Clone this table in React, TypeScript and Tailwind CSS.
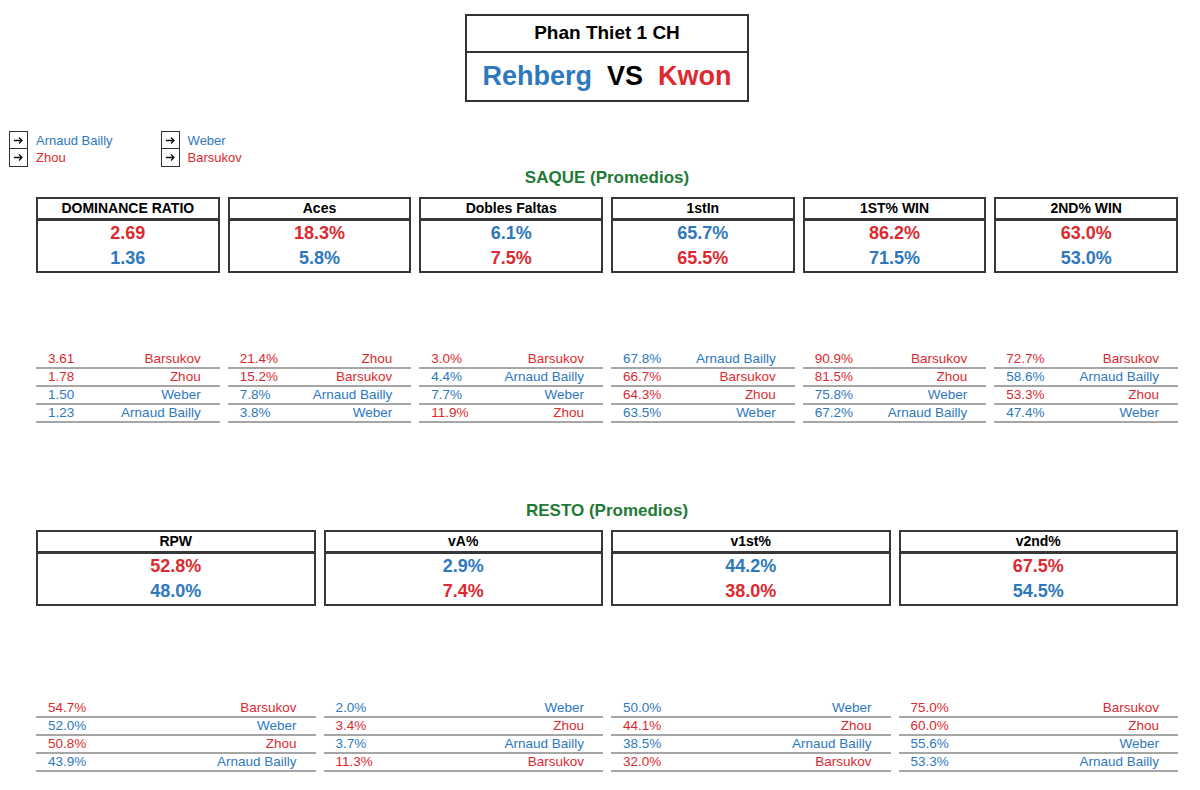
import React from 'react';

const BLUE = 'text-[#2e78bd]';
const RED = 'text-[#dc2a30]';

type Side = 'b' | 'r';
const color = (s: Side) => (s === 'b' ? BLUE : RED);

const players: Record<string, Side> = {
  'Arnaud Bailly': 'b',
  Weber: 'b',
  Zhou: 'r',
  Barsukov: 'r',
};

interface Stat {
  title: string;
  top: [string, Side];
  bottom: [string, Side];
  ranks: [string, string][];
}

const saque: Stat[] = [
  { title: 'DOMINANCE RATIO', top: ['2.69', 'r'], bottom: ['1.36', 'b'], ranks: [['3.61', 'Barsukov'], ['1.78', 'Zhou'], ['1.50', 'Weber'], ['1.23', 'Arnaud Bailly']] },
  { title: 'Aces', top: ['18.3%', 'r'], bottom: ['5.8%', 'b'], ranks: [['21.4%', 'Zhou'], ['15.2%', 'Barsukov'], ['7.8%', 'Arnaud Bailly'], ['3.8%', 'Weber']] },
  { title: 'Dobles Faltas', top: ['6.1%', 'b'], bottom: ['7.5%', 'r'], ranks: [['3.0%', 'Barsukov'], ['4.4%', 'Arnaud Bailly'], ['7.7%', 'Weber'], ['11.9%', 'Zhou']] },
  { title: '1stIn', top: ['65.7%', 'b'], bottom: ['65.5%', 'r'], ranks: [['67.8%', 'Arnaud Bailly'], ['66.7%', 'Barsukov'], ['64.3%', 'Zhou'], ['63.5%', 'Weber']] },
  { title: '1ST% WIN', top: ['86.2%', 'r'], bottom: ['71.5%', 'b'], ranks: [['90.9%', 'Barsukov'], ['81.5%', 'Zhou'], ['75.8%', 'Weber'], ['67.2%', 'Arnaud Bailly']] },
  { title: '2ND% WIN', top: ['63.0%', 'r'], bottom: ['53.0%', 'b'], ranks: [['72.7%', 'Barsukov'], ['58.6%', 'Arnaud Bailly'], ['53.3%', 'Zhou'], ['47.4%', 'Weber']] },
];

const resto: Stat[] = [
  { title: 'RPW', top: ['52.8%', 'r'], bottom: ['48.0%', 'b'], ranks: [['54.7%', 'Barsukov'], ['52.0%', 'Weber'], ['50.8%', 'Zhou'], ['43.9%', 'Arnaud Bailly']] },
  { title: 'vA%', top: ['2.9%', 'b'], bottom: ['7.4%', 'r'], ranks: [['2.0%', 'Weber'], ['3.4%', 'Zhou'], ['3.7%', 'Arnaud Bailly'], ['11.3%', 'Barsukov']] },
  { title: 'v1st%', top: ['44.2%', 'b'], bottom: ['38.0%', 'r'], ranks: [['50.0%', 'Weber'], ['44.1%', 'Zhou'], ['38.5%', 'Arnaud Bailly'], ['32.0%', 'Barsukov']] },
  { title: 'v2nd%', top: ['67.5%', 'r'], bottom: ['54.5%', 'b'], ranks: [['75.0%', 'Barsukov'], ['60.0%', 'Zhou'], ['55.6%', 'Weber'], ['53.3%', 'Arnaud Bailly']] },
];

const Arrow = () => (
  <svg width="11" height="9" viewBox="0 0 11 9" fill="none" stroke="#111" strokeWidth="1.3">
    <path d="M1 4.5h8M6 1.5l3 3-3 3" />
  </svg>
);

const LegendGroup: React.FC<{ a: string; b: string }> = ({ a, b }) => (
  <div className="flex items-center">
    <div className="flex flex-col border border-[#333]">
      <div className="w-[17px] h-[17px] flex items-center justify-center border-b border-[#333]"><Arrow /></div>
      <div className="w-[17px] h-[17px] flex items-center justify-center"><Arrow /></div>
    </div>
    <div className="flex flex-col ml-[8px] text-[13px] leading-[17px]">
      <span className={color(players[a])}>{a}</span>
      <span className={color(players[b])}>{b}</span>
    </div>
  </div>
);

const StatCard: React.FC<{ s: Stat }> = ({ s }) => (
  <div className="border-2 border-[#383838]">
    <div className="h-[22px] flex items-center justify-center text-[14px] font-bold text-black border-b-[3px] border-[#383838]">
      {s.title}
    </div>
    <div className="h-[50px] flex flex-col items-center justify-center text-[18px] font-bold leading-[25px]">
      <span className={color(s.top[1])}>{s.top[0]}</span>
      <span className={color(s.bottom[1])}>{s.bottom[0]}</span>
    </div>
  </div>
);

const RankList: React.FC<{ s: Stat }> = ({ s }) => (
  <div className="flex flex-col">
    {s.ranks.map(([v, name]) => (
      <div
        key={name}
        className={`h-[18px] flex items-center justify-between pl-[12px] pr-[19px] text-[13.5px] border-b-2 border-[#a6a6a6] ${color(players[name])}`}
      >
        <span>{v}</span>
        <span>{name}</span>
      </div>
    ))}
  </div>
);

export default function App() {
  return (
    <div className="w-[1200px] h-[790px] bg-white overflow-hidden font-['Liberation_Sans',Arial,sans-serif] pt-[14px]">
      {/* Match header */}
      <div className="ml-[36px] w-[1142px] flex justify-center">
        <div className="w-[284px] border-2 border-[#333] flex flex-col">
          <div className="h-[37px] flex items-center justify-center text-[19px] font-bold text-black border-b-2 border-[#333]">
            Phan Thiet 1 CH
          </div>
          <div className="h-[47px] flex items-center justify-center gap-[15px] text-[27px] font-bold">
            <span className={BLUE}>Rehberg</span>
            <span className="text-black">VS</span>
            <span className={RED}>Kwon</span>
          </div>
        </div>
      </div>

      {/* Legend */}
      <div className="flex pl-[9px] mt-[29px] gap-[48px]">
        <LegendGroup a="Arnaud Bailly" b="Zhou" />
        <LegendGroup a="Weber" b="Barsukov" />
      </div>

      {/* SAQUE */}
      <div className="ml-[36px] w-[1142px]">
        <div className="mt-[1px] text-center text-[17px] font-bold text-[#1f7a35] leading-[20px]">SAQUE (Promedios)</div>
        <div className="mt-[9px] grid grid-cols-6 gap-[8px]">
          {saque.map((s) => <StatCard key={s.title} s={s} />)}
        </div>
        <div className="mt-[78px] grid grid-cols-6 gap-[8px]">
          {saque.map((s) => <RankList key={s.title} s={s} />)}
        </div>

        {/* RESTO */}
        <div className="mt-[78px] text-center text-[17px] font-bold text-[#1f7a35] leading-[20px]">RESTO (Promedios)</div>
        <div className="mt-[9px] grid grid-cols-4 gap-[8px]">
          {resto.map((s) => <StatCard key={s.title} s={s} />)}
        </div>
        <div className="mt-[94px] grid grid-cols-4 gap-[8px]">
          {resto.map((s) => <RankList key={s.title} s={s} />)}
        </div>
      </div>
    </div>
  );
}
